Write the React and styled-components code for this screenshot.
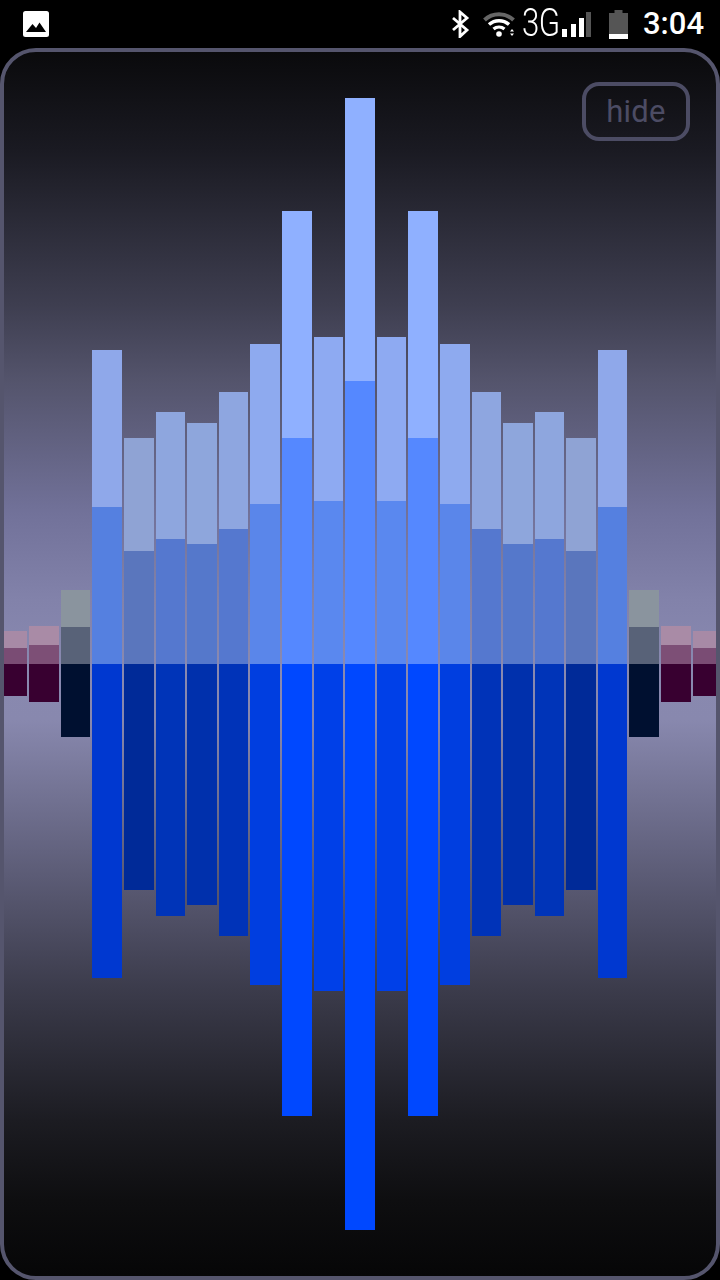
import React from "react";
import styled, { createGlobalStyle } from "styled-components";

const Global = createGlobalStyle`
  html, body { margin: 0; padding: 0; background: #000; }
  #root { width: 720px; height: 1280px; overflow: hidden; }
`;

const Screen = styled.div`
  width: 720px; height: 1280px; display: flex; flex-direction: column; background: #000;
`;
const StatusBar = styled.header`
  height: 48px; flex: none; display: flex; align-items: center; padding: 0 17px 0 23px; color: #fff;
`;
const StatusLeft = styled.div`flex: 1; display: flex; align-items: center;`;
const StatusRight = styled.div`display: flex; align-items: center; height: 48px;`;
const Net = styled.span`
  font: 300 38px/48px Roboto, sans-serif; width: 36px; margin: 0 4px 0 6px; display: block;
  transform: scaleX(.82); transform-origin: left center; white-space: nowrap; position: relative; top: -1px; letter-spacing: -.5px;
`;
const Clock = styled.span`
  font: 500 31px/48px Roboto, sans-serif; width: 60px; margin-left: 15px; white-space: nowrap;
`;
const Icon = styled.svg`display: block; flex: none; margin-left: ${p => p.$gap || 0}px;`;

const Frame = styled.main`
  position: relative; flex: 1; box-sizing: border-box; border: 4px solid #55556d; border-radius: 36px; overflow: hidden;
  background: linear-gradient(180deg, #0a0a0c 0, #1a1a22 98px, #3e3e50 253px, #54546c 329px, #72729a 463px, #8282aa 548px, #8989b0 612px, #8888ae 668px, #62627e 801px, #3c3c4c 935px, #1c1c22 1068px, #0e0e10 1148px, #060607 1224px);
`;
const Stage = styled.div`
  display: flex; height: 100%; margin: 0 -7.4px; filter: blur(.75px);
`;
const Bar = styled.div`
  width: 31.6px; flex: none; box-sizing: border-box; padding: 0 1px; display: flex; flex-direction: column;
`;
const Upper = styled.div`
  height: 612px; flex: none; display: flex; flex-direction: column; justify-content: flex-end;
`;
const Segment = styled.div`
  height: ${p => p.$h}px; flex: none; background: ${p => p.$c};
`;
const HideButton = styled.button`
  position: absolute; top: 30px; right: 26px; width: 108px; height: 59px; box-sizing: border-box;
  border: 4px solid #4c4c64; border-radius: 17px; background: transparent; color: #4c4c64;
  font: 400 31px/1 Roboto, sans-serif; padding: 0; letter-spacing: .3px;
`;

const half = [
  [631, 648, 696, "#a78aa6", "#7a4c74", "#380030"],
  [626, 645, 702, "#a98ba6", "#7d4f76", "#380030"],
  [590, 627, 737, "#8a949e", "#586278", "#001030"],
  [350, 507, 978, "#8fa8ea", "#5580e0", "#0038d0"],
  [438, 551, 890, "#8fa3d4", "#5a76bd", "#002a98"],
  [412, 539, 916, "#8ea6de", "#5578cf", "#0034b8"],
  [423, 544, 905, "#8ea6dc", "#5578cb", "#0030ac"],
  [392, 529, 936, "#8ea6e0", "#5578cf", "#0033b8"],
  [344, 504, 985, "#8eaaef", "#5a86ea", "#003ee0"],
  [211, 438, 1116, "#8fb0ff", "#5588ff", "#0048ff"],
  [337, 501, 991, "#8eaaf2", "#5a88ef", "#0040e8"],
  [98, 381, 1230, "#8fb0ff", "#5588ff", "#0048ff"],
];
const bars = [...half, ...half.slice(0, -1).reverse()];

export default function App() {
  return (
    <Screen>
      <Global />
      <StatusBar>
        <StatusLeft>
          <svg width="26" height="26" viewBox="0 0 26 26">
            <rect width="26" height="26" rx="2.5" fill="#fff" />
            <path d="M3 21 L9.5 13 L13 17 L16.5 11.5 L23 21 Z" fill="#000" />
          </svg>
        </StatusLeft>
        <StatusRight>
          <Icon width="20" height="28" viewBox="0 0 20 28">
            <path d="M3 8 L17 20 L10 26.5 V2 L17 8 L3 20" fill="none" stroke="#fff" strokeWidth="2.8" />
          </Icon>
          <Icon $gap="13" width="33" height="26" viewBox="0 0 33 26">
            <path d="M1.5 9 A21 21 0 0 1 30.5 9" fill="none" stroke="#666" strokeWidth="4" />
            <path d="M6 13.5 A15 15 0 0 1 26 13.5 M10.5 18 A9 9 0 0 1 21.5 18" fill="none" stroke="#fff" strokeWidth="3.4" />
            <circle cx="16" cy="23" r="2.8" fill="#fff" />
            <path d="M27 20.5 L29 18 L31 20.5 Z M27 22.5 L29 25 L31 22.5 Z" fill="#fff" />
          </Icon>
          <Net>3G</Net>
          <Icon width="29" height="26" viewBox="0 0 29 26">
            <rect x="0" y="18" width="5" height="8" fill="#fff" />
            <rect x="9" y="13" width="5" height="13" fill="#fff" />
            <rect x="17" y="7" width="5" height="19" fill="#fff" />
            <rect x="24" y="1" width="5" height="25" fill="#555" />
          </Icon>
          <Icon $gap="18" width="19" height="29" viewBox="0 0 19 29">
            <path d="M0 3 H5.5 V0 H13.5 V3 H19 V24 H0 Z" fill="#555" />
            <rect y="24" width="19" height="5" fill="#fff" />
          </Icon>
          <Clock>3:04</Clock>
        </StatusRight>
      </StatusBar>
      <Frame>
        <Stage>
          {bars.map(([top, mid, bottom, light, medium, dark], i) => (
            <Bar key={i}>
              <Upper>
                <Segment $h={mid - top} $c={light} />
                <Segment $h={664 - mid} $c={medium} />
              </Upper>
              <Segment $h={bottom - 664} $c={dark} />
            </Bar>
          ))}
        </Stage>
        <HideButton>hide</HideButton>
      </Frame>
    </Screen>
  );
}
